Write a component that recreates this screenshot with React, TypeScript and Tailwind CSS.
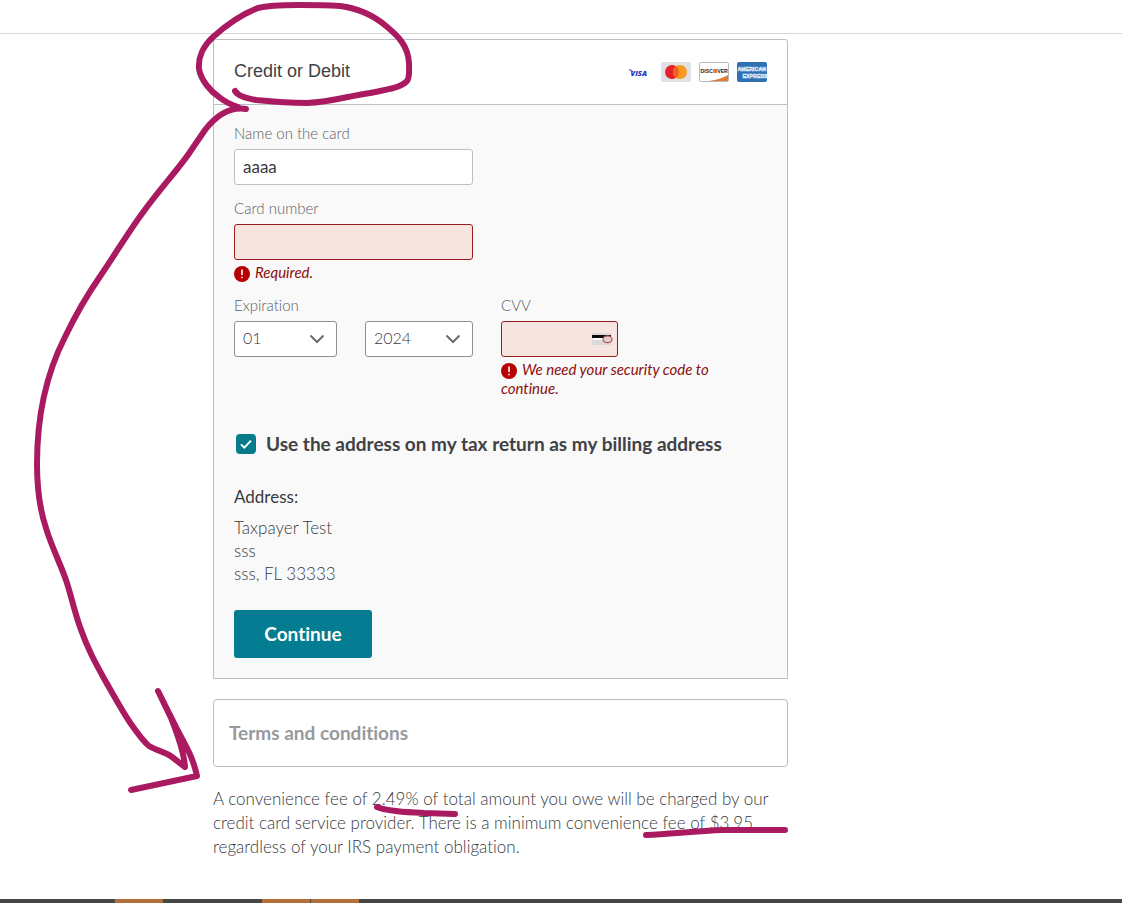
import type { ReactNode } from "react"

const CARD_FRAME = "h-5 w-[30px] shrink-0"

const Visa = () => (
  <svg className={CARD_FRAME} viewBox="0 0 30 20" role="img" aria-label="Visa">
    <path d="M6 8h2.6l1 2" fill="none" stroke="#2b3fc4" strokeWidth="1" />
    <text x="7.5" y="14" fontFamily="Open Sans, sans-serif" fontSize="7.5" fontWeight="800" fontStyle="italic" fill="#2336bd">
      VISA
    </text>
  </svg>
)

const Mastercard = () => (
  <svg className={CARD_FRAME} viewBox="0 0 30 20" role="img" aria-label="Mastercard">
    <rect width="30" height="20" rx="2" fill="#dfe0e2" />
    <circle cx="11" cy="10" r="7" fill="#e3202b" />
    <circle cx="19" cy="10" r="7" fill="#f79a22" />
    <path d="M15 4.3a7 7 0 0 1 0 11.4a7 7 0 0 1 0-11.4z" fill="#f4601f" />
  </svg>
)

const Discover = () => (
  <svg className={CARD_FRAME} viewBox="0 0 30 20" role="img" aria-label="Discover">
    <rect x="0.5" y="0.5" width="29" height="19" rx="1.5" fill="#fff" stroke="#b5b8ba" />
    <path d="M29 13v6H10c8-1 14-3 19-6z" fill="#e37a32" />
    <text x="1.5" y="11" fontFamily="Liberation Sans, sans-serif" fontSize="5.2" fontWeight="700" fill="#222">
      DISC
    </text>
    <text x="18.2" y="11" fontFamily="Liberation Sans, sans-serif" fontSize="5.2" fontWeight="700" fill="#222">
      VER
    </text>
    <circle cx="16.2" cy="9" r="2.2" fill="#e8762c" />
  </svg>
)

const Amex = () => (
  <svg className={CARD_FRAME} viewBox="0 0 30 20" role="img" aria-label="American Express">
    <rect width="30" height="20" rx="2" fill="#2f70b5" />
    <text x="0.5" y="9" fontFamily="Liberation Sans, sans-serif" fontSize="5.3" fontWeight="700" fill="#2f70b5" stroke="#dce9f6" strokeWidth="0.6">
      AMERICAN
    </text>
    <text x="5.5" y="16" fontFamily="Liberation Sans, sans-serif" fontSize="5.3" fontWeight="700" fill="#2f70b5" stroke="#dce9f6" strokeWidth="0.6">
      EXPRESS
    </text>
  </svg>
)

const Chevron = () => (
  <svg className="pointer-events-none absolute top-3 right-3 h-3 w-4" viewBox="0 0 16 12" fill="none">
    <path d="M1.5 2.5L8 9l6.5-6.5" stroke="#6b6c72" strokeWidth="2" />
  </svg>
)

const FieldError = ({ id, children }: { id: string; children: ReactNode }) => (
  <p id={id} className="mt-[3px] text-[15px] leading-[18px] text-[#8c0d0d] italic">
    <svg className="mr-[5px] inline-block size-4 align-[-4px]" viewBox="0 0 16 16">
      <circle cx="8" cy="8" r="8" fill="#b80000" />
      <path d="M8 3.5v5.5M8 10.7v1.6" stroke="#fff" strokeWidth="1.6" />
    </svg>
    {children}
  </p>
)

type SelectProps = {
  label: string
  value: string
  className: string
}

const Select = ({ label, value, className }: SelectProps) => (
  <div className={`relative ${className}`}>
    <select
      aria-label={label}
      defaultValue={value}
      className="h-9 w-full appearance-none rounded-[3px] border border-[#8d9096] bg-white px-2 pb-0.5 text-base font-light text-[#393a3d]"
    >
      <option>{value}</option>
    </select>
    <Chevron />
  </div>
)

const LABEL = "mb-1.5 block text-[15px] leading-5 font-light text-[#5c5e63]"
const INVALID = "h-9 w-full rounded-[3px] border border-[#9c1c1c] bg-[#f6e4e1] px-2 text-[17px]"

const PaymentForm = () => (
  <form className="bg-[#f9f9f9] p-5 pt-[18px]">
    <div className="w-full max-w-[239px]">
      <label htmlFor="name" className={LABEL}>Name on the card</label>
      <input
        id="name"
        defaultValue="aaaa"
        className="h-9 w-full rounded-[3px] border border-[#babec5] bg-white px-2 pb-0.5 text-[17px] text-[#393a3d]"
      />
    </div>

    <div className="mt-[13px] w-full max-w-[239px]">
      <label htmlFor="number" className={LABEL}>Card number</label>
      <input id="number" aria-invalid aria-describedby="number-error" className={INVALID} />
      <FieldError id="number-error">Required.</FieldError>
    </div>

    <div className="mt-[13px] flex gap-7">
      <fieldset>
        <legend className={LABEL}>Expiration</legend>
        <div className="flex gap-7">
          <Select label="Month" value="01" className="w-[103px]" />
          <Select label="Year" value="2024" className="w-[108px]" />
        </div>
      </fieldset>
      <div className="max-w-[230px]">
        <label htmlFor="cvv" className={LABEL}>CVV</label>
        <div className="relative w-[117px]">
          <input id="cvv" aria-invalid aria-describedby="cvv-error" className={INVALID} />
          <svg className="pointer-events-none absolute top-3 right-1 h-3 w-[22px]" viewBox="0 0 22 12">
            <rect width="19" height="12" fill="#dcdad9" />
            <rect y="2" width="19" height="3" fill="#0b0b0b" />
            <rect x="1" y="5" width="11" height="2" fill="#fff" />
            <ellipse cx="15.5" cy="6.3" rx="4.5" ry="3.4" fill="#ddd0ce" stroke="#c4484a" strokeWidth="1.2" />
          </svg>
        </div>
        <FieldError id="cvv-error">We need your security code to continue.</FieldError>
      </div>
    </div>

    <label className="mt-[37px] flex items-center gap-2.5 pl-0.5 text-[19px] leading-5 font-bold text-[#404145]">
      <span className="relative size-5 shrink-0">
        <input type="checkbox" defaultChecked className="block size-5 appearance-none rounded bg-[#077a8c]" />
        <svg className="pointer-events-none absolute inset-0 size-5" viewBox="0 0 20 20" fill="none">
          <path d="M5 10.4l3.3 3.2L15 6.6" stroke="#fff" strokeWidth="2" />
        </svg>
      </span>
      Use the address on my tax return as my billing address
    </label>

    <h2 className="mt-[31px] text-[17px] leading-6 text-[#393a3d]">Address:</h2>
    <address className="mt-[7px] text-[17px] leading-[23px] font-light text-[#393a3d] not-italic">
      Taxpayer Test
      <br />
      sss
      <br />
      sss, FL 33333
    </address>

    <button type="button" className="mt-[25px] h-12 w-[138px] rounded-[3px] bg-[#047c91] text-[19px] font-bold text-white">
      Continue
    </button>
  </form>
)

// Freehand marker strokes over the page
const Markup = () => (
  <svg
    className="pointer-events-none absolute top-0 left-0 h-[903px] w-[830px]"
    viewBox="0 0 830 903"
    fill="none"
    stroke="#aa1a60"
    strokeWidth="6"
    strokeLinecap="round"
    strokeLinejoin="round"
    aria-hidden
  >
    <path d="M235 91C239 97 247 98 256 100C276 102 290 103 307 103C332 102 348 96 370 93C385 90 401 88 407 81C410 77 409 70 409 63C408 45 397 35 386 26C373 15 356 8 340 6C325 5 311 5 299 5C284 5 269 5 258 8C240 15 223 28 213 37C203 46 198 58 199 69C201 80 210 91 219 97C225 102 232 105 238 107" />
    <path d="M246 109C226 106 212 121 205 130C201 136 196 143 190 152C180 167 160 189 144 211C129 231 116 253 101 275C85 298 75 316 65 337C43 380 37 427 37 464C37 490 40 510 46 528C51 545 60 563 66 580C71 595 74 610 80 627C88 650 96 664 106 682C113 694 122 711 131 724C138 734 144 742 149 746C157 751 166 752 172 757L185 767C184 752 177 733 171 718L158 691L178 731C187 748 193 758 197 776L131 790" />
    <path d="M377 807C388 812 408 812 424 813L455 814" />
    <path d="M646 835C671 834 695 831 724 830L785 830" />
  </svg>
)

const App = () => (
  <div
    className="relative flex min-h-screen flex-col bg-white [font-variant-ligatures:none]"
    style={{ fontFamily: "Lato, sans-serif" }}
  >
    <header className="h-[34px] border-b border-[#d4d7dc]" />

    <main className="w-full max-w-[788px] pt-[5px] pb-10 pl-[213px]">
      <section className="overflow-hidden rounded-t-[3px] border border-[#babec5]">
        <div className="flex h-[65px] items-center justify-between border-b border-[#babec5] px-5">
          <h1 className="pb-0.5 font-['Liberation_Sans'] text-lg text-[#404145]">Credit or Debit</h1>
          <div className="flex gap-2">
            <Visa />
            <Mastercard />
            <Discover />
            <Amex />
          </div>
        </div>
        <PaymentForm />
      </section>

      <section className="mt-5 rounded border border-[#babec5] px-[15px] py-5">
        <h2 className="text-[19px] leading-[26px] font-bold text-[#97999d]">Terms and conditions</h2>
      </section>

      <p className="mt-5 text-[17px] leading-6 font-light text-[#393a3d]">
        A convenience fee of 2.49% of total amount you owe will be charged by our credit card
        service provider. There is a minimum convenience fee of $3.95 regardless of your IRS
        payment obligation.
      </p>
    </main>

    <footer className="mt-auto flex h-1 bg-[#454745] pl-[115px]">
      <div className="w-12 bg-[#b4703a]" />
      <div className="ml-[99px] w-12 bg-[#b4703a]" />
      <div className="ml-px w-12 bg-[#b4703a]" />
    </footer>

    <Markup />
  </div>
)

export default App
